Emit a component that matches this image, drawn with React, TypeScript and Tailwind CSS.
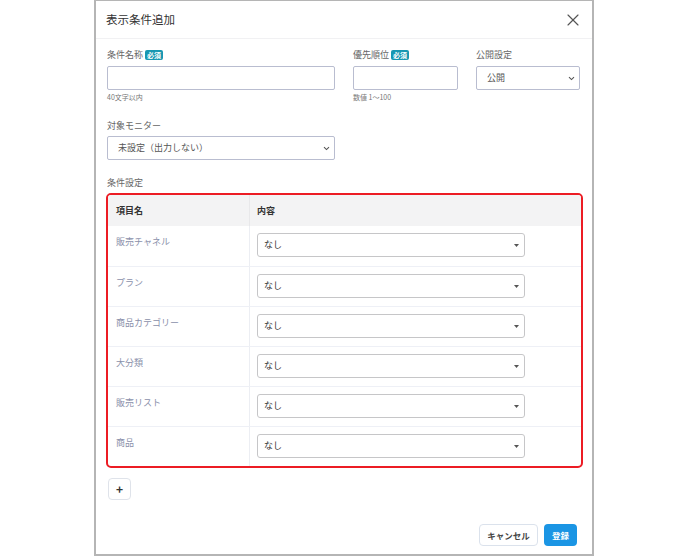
import React from "react";
import { X } from "lucide-react";

const rows = ["販売チャネル", "プラン", "商品カテゴリー", "大分類", "販売リスト", "商品"];

const Required: React.FC = () => (
  <span className="inline-flex items-center h-[10px] px-[2px] rounded-[2px] bg-[#1797b2] text-white text-[7px] font-bold leading-none">
    必須
  </span>
);

const Chevron: React.FC = () => (
  <svg width="7" height="5" viewBox="0 0 7 5" className="text-[#555]">
    <path d="M1 1.2 L3.5 3.6 L6 1.2" fill="none" stroke="currentColor" strokeWidth="1.1" />
  </svg>
);

const Caret: React.FC = () => (
  <svg width="5" height="3" viewBox="0 0 5 3">
    <polygon points="0,0 5,0 2.5,3" fill="#555" />
  </svg>
);

export default function App() {
  return (
    <div className="w-[688px] h-[557px] bg-white flex justify-center font-['Noto_Sans_CJK_JP','Noto_Sans',sans-serif]">
      <div className="w-[500px] h-[556px] border-x-2 border-b-2 border-t border-[#b5b5b5] flex flex-col bg-white">
        {/* header */}
        <div className="h-[38px] flex items-center justify-between pl-[10px] pr-[9px] border-b border-[#f1f1f3]">
          <h2 className="text-[11.5px] text-[#333]">表示条件追加</h2>
          <X size={20} strokeWidth={1.4} className="text-[#555]" />
        </div>

        <div className="flex flex-col px-[11px] pt-[10px]">
          {/* first row */}
          <div className="flex gap-[18px]">
            <div className="w-[228px] flex flex-col">
              <div className="h-[12px] flex items-center gap-[2px] text-[9px] text-[#666]">
                条件名称 <Required />
              </div>
              <input className="mt-[5px] h-[24px] border border-[#b9bdd0] rounded-[2px]" />
              <p className="mt-[2px] text-[7px] leading-[10px] text-[#777]">40文字以内</p>
            </div>
            <div className="w-[105px] flex flex-col">
              <div className="h-[12px] flex items-center gap-[2px] text-[9px] text-[#666]">
                優先順位 <Required />
              </div>
              <input className="mt-[5px] h-[24px] border border-[#b9bdd0] rounded-[2px]" />
              <p className="mt-[2px] text-[7px] leading-[10px] text-[#777]">数値 1〜100</p>
            </div>
            <div className="w-[104px] flex flex-col">
              <div className="h-[12px] flex items-center text-[9px] text-[#666]">公開設定</div>
              <div className="mt-[5px] h-[24px] border border-[#b9bdd0] rounded-[2px] flex items-center justify-between pl-[10px] pr-[4px] text-[9px] text-[#555]">
                公開
                <Chevron />
              </div>
            </div>
          </div>

          {/* monitor */}
          <div className="mt-[18px] h-[12px] flex items-center text-[9px] text-[#666]">対象モニター</div>
          <div className="mt-[4px] w-[228px] h-[24px] border border-[#b9bdd0] rounded-[2px] flex items-center justify-between pl-[10px] pr-[4px] text-[9px] text-[#555]">
            未設定（出力しない）
            <Chevron />
          </div>

          {/* conditions */}
          <div className="mt-[17px] h-[12px] flex items-center text-[9px] text-[#666]">条件設定</div>
          <div className="mt-[4px] -ml-[1px] w-[477px] border-2 border-[#ec1c24] rounded-[5px] overflow-hidden">
            <div className="h-[31px] flex bg-[#f3f3f4] text-[9px] font-bold text-[#333]">
              <div className="w-[142px] flex items-center pl-[8px] border-r border-[#e8e8ea]">項目名</div>
              <div className="flex-1 flex items-center pl-[7px]">内容</div>
            </div>
            {rows.map((r, i) => (
              <div
                key={r}
                className={`h-[40px] flex ${i > 0 ? "border-t border-[#eef0f6]" : ""}`}
              >
                <div className="w-[142px] pl-[8px] pt-[9px] text-[9px] text-[#8a90aa] border-r border-[#eceef3]">
                  {r}
                </div>
                <div className="flex-1 pl-[7px] pt-[7px]">
                  <div className="w-[268px] h-[24px] border border-[#c6c6c8] rounded-[3px] flex items-center justify-between pl-[6px] pr-[5px] text-[9px] text-[#333]">
                    なし
                    <Caret />
                  </div>
                </div>
              </div>
            ))}
          </div>

          {/* add */}
          <button className="mt-[10px] ml-[1px] w-[23px] h-[22px] border border-[#dfe3ea] rounded-[4px] flex items-center justify-center text-[12px] font-bold text-[#333] leading-none">
            +
          </button>

          {/* footer */}
          <div className="mt-[24px] mr-[4px] flex justify-end gap-[6px]">
            <button className="w-[59px] h-[22px] border border-[#dbe2ec] rounded-[4px] text-[8.5px] font-bold text-[#444]">
              キャンセル
            </button>
            <button className="w-[33px] h-[22px] bg-[#1a95e4] rounded-[4px] text-[8.5px] font-bold text-white">
              登録
            </button>
          </div>
        </div>
      </div>
    </div>
  );
}
